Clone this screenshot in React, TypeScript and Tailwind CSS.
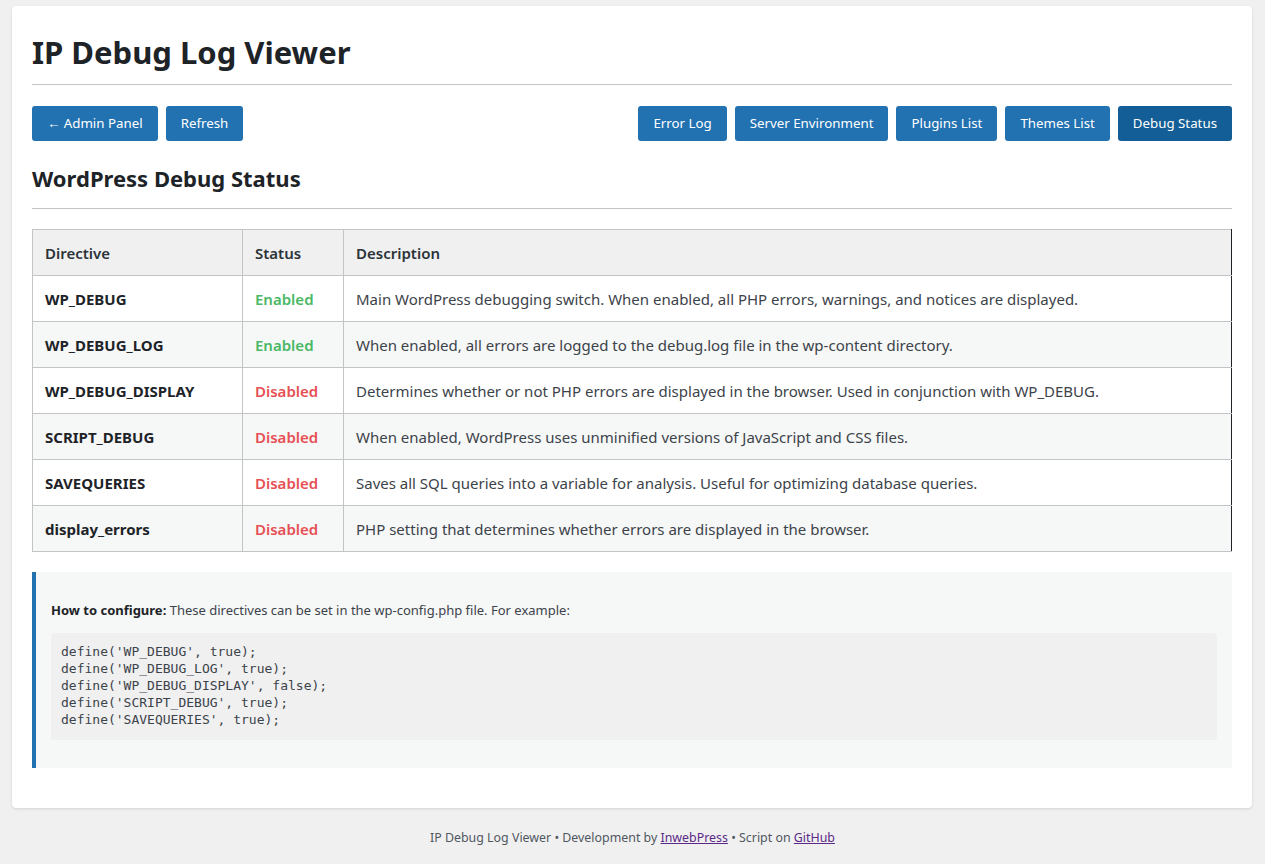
import React from "react";

const rows = [
  { name: "WP_DEBUG", on: true, desc: "Main WordPress debugging switch. When enabled, all PHP errors, warnings, and notices are displayed." },
  { name: "WP_DEBUG_LOG", on: true, desc: "When enabled, all errors are logged to the debug.log file in the wp-content directory." },
  { name: "WP_DEBUG_DISPLAY", on: false, desc: "Determines whether or not PHP errors are displayed in the browser. Used in conjunction with WP_DEBUG." },
  { name: "SCRIPT_DEBUG", on: false, desc: "When enabled, WordPress uses unminified versions of JavaScript and CSS files." },
  { name: "SAVEQUERIES", on: false, desc: "Saves all SQL queries into a variable for analysis. Useful for optimizing database queries." },
  { name: "display_errors", on: false, desc: "PHP setting that determines whether errors are displayed in the browser." },
];

const btn = "h-[35px] px-[15px] rounded-[3px] text-[13.3px] text-white flex items-center";

export default function App() {
  return (
    <div className="min-h-[864px] bg-[#f0f0f1] pt-[6px] px-[12px] text-[#3c434a]" style={{ fontFamily: "'Noto Sans', 'Open Sans', sans-serif" }}>
      <div className="bg-white rounded-[4px] shadow-[0_1px_3px_rgba(0,0,0,0.12)] px-[20px] pt-[28px] pb-[40px] mr-[1px]">
        <h1 className="text-[31px] font-bold text-[#1d2327] leading-[36px] pb-[14px] border-b border-[#c3c4c7]">IP Debug Log Viewer</h1>

        <div className="flex justify-between mt-[21px]">
          <div className="flex gap-[8px]">
            <button className={`${btn} bg-[#2271b1]`}>← Admin Panel</button>
            <button className={`${btn} bg-[#2271b1]`}>Refresh</button>
          </div>
          <div className="flex gap-[8px]">
            <button className={`${btn} bg-[#2271b1]`}>Error Log</button>
            <button className={`${btn} bg-[#2271b1]`}>Server Environment</button>
            <button className={`${btn} bg-[#2271b1]`}>Plugins List</button>
            <button className={`${btn} bg-[#2271b1]`}>Themes List</button>
            <button className={`${btn} bg-[#135e96]`}>Debug Status</button>
          </div>
        </div>

        <h2 className="mt-[23px] text-[22px] font-bold text-[#1d2327] leading-[28px] pb-[16px] border-b border-[#c3c4c7]">WordPress Debug Status</h2>

        <table className="mt-[20px] w-full border-collapse text-[15px] border-l border-t border-b border-[#c3c4c7] border-r-[#1d2327]" style={{ borderRightWidth: 1, borderRightStyle: "solid" }}>
          <thead>
            <tr className="bg-[#f0f0f1] h-[46px]">
              <th className="w-[210px] text-left font-semibold px-[12px] pt-[2px] border-r border-b border-[#c3c4c7] text-[#2c3338]">Directive</th>
              <th className="w-[101px] text-left font-semibold px-[12px] pt-[2px] border-r border-b border-[#c3c4c7] text-[#2c3338]">Status</th>
              <th className="text-left font-semibold px-[12px] pt-[2px] border-b border-[#c3c4c7] text-[#2c3338]">Description</th>
            </tr>
          </thead>
          <tbody>
            {rows.map((r, i) => (
              <tr key={r.name} className={`h-[46px] ${i % 2 === 1 ? "bg-[#f6f7f7]" : "bg-white"}`}>
                <td className="px-[12px] pt-[2px] font-bold text-[#1d2327] border-r border-b border-[#c3c4c7]">{r.name}</td>
                <td className={`px-[12px] pt-[2px] font-semibold border-r border-b border-[#c3c4c7] ${r.on ? "text-[#4ab866]" : "text-[#e65054]"}`}>
                  {r.on ? "Enabled" : "Disabled"}
                </td>
                <td className="px-[12px] pt-[2px] border-b border-[#c3c4c7]">{r.desc}</td>
              </tr>
            ))}
          </tbody>
        </table>

        <div className="mt-[20px] bg-[#f6f7f7] border-l-[4px] border-[#2271b1] pl-[15px] pr-[15px] pt-[28px] pb-[28px] text-[13px]">
          <p className="leading-[20px]">
            <strong className="text-[#1d2327]">How to configure:</strong> These directives can be set in the wp-config.php file. For example:
          </p>
          <pre className="mt-[13px] bg-[#f0f0f1] rounded-[3px] px-[10px] pt-[10px] pb-[12px] text-[13px] leading-[17px] text-[#3c434a]" style={{ fontFamily: "'DejaVu Sans Mono', 'Liberation Mono', monospace" }}>
{`define('WP_DEBUG', true);
define('WP_DEBUG_LOG', true);
define('WP_DEBUG_DISPLAY', false);
define('SCRIPT_DEBUG', true);
define('SAVEQUERIES', true);`}
          </pre>
        </div>
      </div>

      <div className="text-center text-[12.4px] text-[#50575e] pt-[21px]">
        IP Debug Log Viewer • Development by <a href="#" className="underline text-[#5b2a86]">InwebPress</a> • Script on <a href="#" className="underline text-[#5b2a86]">GitHub</a>
      </div>
    </div>
  );
}
